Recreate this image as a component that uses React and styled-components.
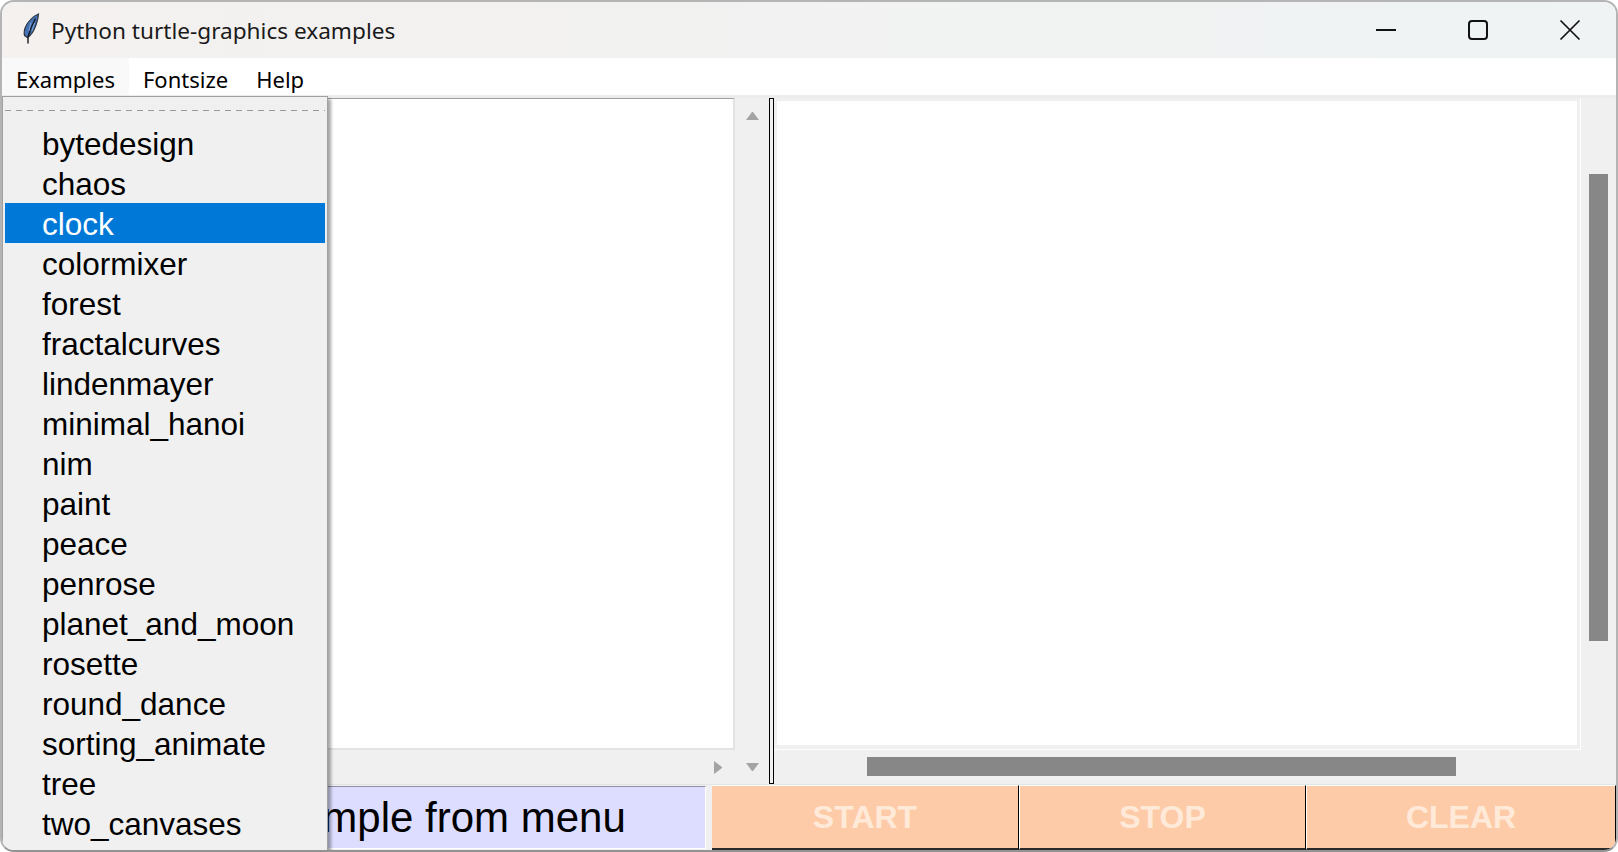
import React from "react";
import styled, { createGlobalStyle } from "styled-components";

const Global = createGlobalStyle`
  html, body { margin: 0; padding: 0; background: #fff; overflow: hidden; }
  * { box-sizing: border-box; }
`;

const Win = styled.div`
  position: relative;
  width: 1618px;
  height: 852px;
  display: flex;
  flex-direction: column;
  overflow: hidden;
  background: #f0f0f0;
  border: 2px solid #b4b4b4;
  border-bottom-color: #939393;
  border-radius: 14px;
  font-family: "Liberation Sans", Arial, sans-serif;
`;

const TitleBar = styled.div`
  flex: 0 0 56px;
  display: flex;
  align-items: center;
  background: linear-gradient(90deg, #f4f1ef, #eff3f4);
  padding-left: 18px;
`;

const TitleText = styled.span`
  font-family: "Noto Sans", sans-serif;
  font-size: 22.6px;
  color: #1a1a1a;
  margin-left: 9px;
  flex: 1;
`;

const Ctrl = styled.div`
  width: ${(p) => p.$w}px;
  height: 56px;
  display: flex;
  align-items: center;
  justify-content: center;
`;

const MenuBar = styled.div`
  flex: 0 0 40px;
  display: flex;
  background: #fff;
  border-bottom: 3px solid #ececec;
`;

const MenuItem = styled.div`
  height: 37px;
  padding: 4px 14px 0;
  display: flex;
  align-items: center;
  font-family: "Noto Sans", sans-serif;
  font-size: 22px;
  color: #000;
  background: ${(p) => (p.$active ? "#f9f9f9" : "#fff")};
`;

const Main = styled.div`
  flex: 1;
  display: flex;
  min-height: 0;
  border-bottom: 1px solid #e4e4e4;
`;

const LeftPane = styled.div`
  flex: 0 0 767px;
  display: grid;
  grid-template-columns: 1fr 34px;
  grid-template-rows: 1fr 34px;
`;

const TextArea = styled.div`
  background: #fff;
  border-right: 2px solid #e3e3e3;
  border-bottom: 2px solid #e3e3e3;
  border-top: 1px solid #a0a0a0;
`;

const HArrow = styled.div`
  display: flex;
  align-items: center;
  justify-content: flex-end;
  padding: 0 12px 0 0;
`;

const VBarLeft = styled.div`
  grid-row: 1 / span 2;
  grid-column: 2;
  display: flex;
  flex-direction: column;
  justify-content: space-between;
  align-items: center;
  padding: 12px 0 12px;
`;

const Sash = styled.div`
  flex: 0 0 5px;
  background: #f0f0f0;
  border: 1px solid #000;
`;

const RightPane = styled.div`
  flex: 1;
  display: grid;
  grid-template-columns: 1fr 35px;
  grid-template-rows: 1fr 34px;
`;

const CanvasFrame = styled.div`
  padding: 3px 3px 4px 3px;
  border-right: 1px solid #fff;
  border-bottom: 1px solid #fff;
`;

const CanvasArea = styled.div`
  width: 100%;
  height: 100%;
  background: #fff;
`;

const VTrack = styled.div`
  grid-row: 1 / span 2;
  grid-column: 2;
  padding: 76px 0 0 8px;
`;

const VThumb = styled.div`
  width: 19px;
  height: 467px;
  background: #878787;
`;

const HTrack = styled.div`
  padding: 7px 0 0 93px;
`;

const HThumb = styled.div`
  width: 589px;
  height: 19px;
  background: #878787;
`;

const BottomBar = styled.div`
  flex: 0 0 65px;
  display: flex;
`;

const Status = styled.div`
  flex: 0 0 704px;
  margin: 1px 0 1px;
  background: #ddddff;
  border-top: 1px solid #8f8fa8;
  border-right: 1px solid #fff;
  border-bottom: 1px solid #fff;
  display: flex;
  align-items: center;
  justify-content: center;
  font-size: 42px;
  color: #000;
  padding-left: 17px;
`;

const Buttons = styled.div`
  margin-left: 6px;
  flex: 1;
  display: flex;
`;

const Btn = styled.div`
  flex: 0 0 ${(p) => p.$w}px;
  background: #fecba8;
  border-top: 1px solid #fff;
  border-bottom: 2px solid #2a2a2a;
  border-right: 1px solid #000;
  border-left: ${(p) => (p.$first ? "0" : "1px solid #fff")};
  padding-top: 1px;
  display: flex;
  align-items: center;
  justify-content: center;
  color: #ffead9;
  font-size: 32px;
  font-weight: 700;
`;

const Popup = styled.div`
  position: absolute;
  left: 0;
  top: 94px;
  width: 326px;
  height: 780px;
  background: #f0f0f0;
  border: 1px solid #a0a0a0;
  padding: 13px 2px 0 2px;
  box-shadow: 3px 3px 3px rgba(0, 0, 0, 0.35);
`;

const Tearoff = styled.div`
  height: 1px;
  margin-bottom: 12px;
  background-image: repeating-linear-gradient(90deg, #9a9a9a 0 6px, transparent 6px 11px);
`;

const Item = styled.div`
  height: 40px;
  line-height: 42px;
  padding-left: 37px;
  font-size: 31.5px;
  color: ${(p) => (p.$sel ? "#fff" : "#000")};
  background: ${(p) => (p.$sel ? "#0078d7" : "transparent")};
`;

const Tri = ({ dir }) => {
  const pts = {
    up: "0,10 6,2 7,2 13,10",
    down: "0,1 13,1 7,9 6,9",
    right: "1,0 9,6 9,7 1,13",
  }[dir];
  return (
    <svg width={dir === "right" ? 10 : 13} height={dir === "right" ? 13 : 10} viewBox={dir === "right" ? "0 0 10 13" : "0 0 13 10"}>
      <polygon points={pts} fill="#a3a3a3" />
    </svg>
  );
};

const Feather = () => (
  <svg width="22" height="34" viewBox="0 0 22 34">
    <path d="M18.5 1C13.5 3 8 8.5 5.5 14 4.2 17 3.8 20 4.6 22.5L7.5 24.5C11 22.5 14 17.5 16 12 17.4 8 18.4 4 18.5 1Z" fill="#4472b4" stroke="#2c3645" strokeWidth="1.2" />
    <path d="M15.5 5.5C12 11.5 9.5 18 8 24.5L8 30.5" fill="none" stroke="#12161c" strokeWidth="1.4" />
    <path d="M11 9.5L9 18M14.5 10L12 18" fill="none" stroke="#86aadb" strokeWidth="0.9" />
  </svg>
);

const items = [
  "bytedesign", "chaos", "clock", "colormixer", "forest", "fractalcurves", "lindenmayer",
  "minimal_hanoi", "nim", "paint", "peace", "penrose", "planet_and_moon", "rosette",
  "round_dance", "sorting_animate", "tree", "two_canvases", "wikipedia",
];

export default function App() {
  return (
    <Win>
      <Global />
      <TitleBar>
        <Feather />
        <TitleText>Python turtle-graphics examples</TitleText>
        <Ctrl $w={90}>
          <svg width="22" height="22" viewBox="0 0 22 22"><path d="M1 11H21" stroke="#111" strokeWidth="2" /></svg>
        </Ctrl>
        <Ctrl $w={93}>
          <svg width="22" height="22" viewBox="0 0 22 22"><rect x="2" y="2" width="18" height="18" rx="3" fill="none" stroke="#111" strokeWidth="2" /></svg>
        </Ctrl>
        <Ctrl $w={92}>
          <svg width="22" height="22" viewBox="0 0 22 22"><path d="M1.5 1.5L20.5 20.5M20.5 1.5L1.5 20.5" stroke="#111" strokeWidth="1.7" /></svg>
        </Ctrl>
      </TitleBar>
      <MenuBar>
        <MenuItem $active>Examples</MenuItem>
        <MenuItem>Fontsize</MenuItem>
        <MenuItem>Help</MenuItem>
      </MenuBar>
      <Main>
        <LeftPane>
          <TextArea />
          <VBarLeft>
            <Tri dir="up" />
            <Tri dir="down" />
          </VBarLeft>
          <HArrow><Tri dir="right" /></HArrow>
        </LeftPane>
        <Sash />
        <RightPane>
          <CanvasFrame><CanvasArea /></CanvasFrame>
          <VTrack><VThumb /></VTrack>
          <HTrack><HThumb /></HTrack>
        </RightPane>
      </Main>
      <BottomBar>
        <Status>Choose example from menu</Status>
        <Buttons>
          <Btn $first $w={307}>START</Btn>
          <Btn $w={287}>STOP</Btn>
          <Btn $w={310}>CLEAR</Btn>
        </Buttons>
      </BottomBar>
      <Popup>
        <Tearoff />
        {items.map((t) => (
          <Item key={t} $sel={t === "clock"}>{t}</Item>
        ))}
      </Popup>
    </Win>
  );
}
